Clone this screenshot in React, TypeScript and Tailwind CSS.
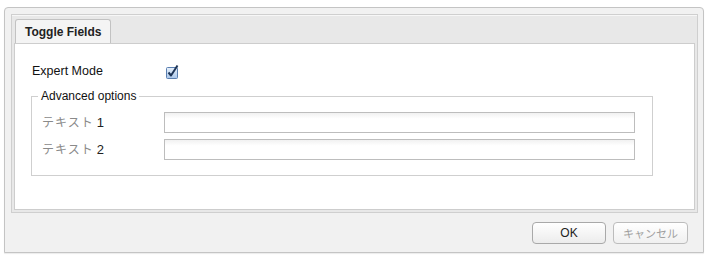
import React from 'react'

function CheckMark() {
  return (
    <svg width="14" height="15" viewBox="0 0 14 15">
      <defs>
        <linearGradient id="cb" x1="0" y1="0" x2="0" y2="1">
          <stop offset="0" stopColor="#e8f1fb" />
          <stop offset="1" stopColor="#a9c6ea" />
        </linearGradient>
      </defs>
      <rect x="0.5" y="3.5" width="11" height="11" rx="1" fill="url(#cb)" stroke="#5a7fb0" />
      <path d="M2.5 8.5 L5 11.5 L11.5 1.5" fill="none" stroke="#1d3557" strokeWidth="2" strokeLinejoin="round" />
    </svg>
  )
}

function Field({ label }: { label: string }) {
  const [kana, num] = label.split(' ')
  return (
    <div className="flex items-center h-[27px]">
      <div className="w-[132px] pl-[10px] text-[12px]">
        <span className="text-[#8a8a8a] tracking-[1px]" style={{ fontFamily: '"Noto Sans CJK JP", sans-serif' }}>{kana}</span>
        <span className="text-[#222] ml-[3px] text-[13px]">{num}</span>
      </div>
      <input
        className="w-[471px] h-[21px] border border-[#bdbdbd] bg-gradient-to-b from-[#f1f1f1] to-white to-30% outline-none"
        type="text"
      />
    </div>
  )
}

export default function App() {
  return (
    <div className="bg-white w-[712px] h-[261px] pl-[4px] pt-[7px]" style={{ fontFamily: '"Liberation Sans", Arial, sans-serif' }}>
      <div className="w-[700px] h-[246px] border border-[#c4c4c4] rounded-t-[4px] bg-[#f1f1f1] flex flex-col shadow-[0_1px_1px_rgba(0,0,0,0.08)]">
        {/* tab panel */}
        <div className="mt-[6px] ml-[6px] w-[687px] h-[199px] border border-[#cfcfcf] bg-[#e8e8e8] flex flex-col">
          <div className="h-[28px] border-t border-[#f7f7f7] flex items-end pl-[3px]">
            <div className="h-[24px] px-[9px] border border-b-0 border-[#c2c2c2] rounded-t-[3px] bg-[#f4f4f4] text-[12px] font-bold text-[#222] flex items-center">
              Toggle Fields
            </div>
          </div>
          <div className="flex-1 mx-[2px] mb-[2px] bg-white border border-[#cdcdcd] pt-[19px]">
            <div className="flex items-center h-[16px] text-[12.5px] text-[#111]">
              <div className="w-[151px] pl-[17px]">Expert Mode</div>
              <CheckMark />
            </div>
            <fieldset className="ml-[16px] mt-[10px] w-[622px] border border-[#cfcfcf] px-0 pt-0 pb-[12px]">
              <legend className="ml-[6px] px-[3px] text-[12px] text-[#111] leading-[14px]">Advanced options</legend>
              <div className="pt-[6px]">
                <Field label="テキスト 1" />
                <Field label="テキスト 2" />
              </div>
            </fieldset>
          </div>
        </div>
        {/* buttons */}
        <div className="flex justify-end gap-[7px] pr-[15px] mt-[9px]">
          <button className="w-[74px] h-[22px] rounded-[4px] border border-[#a9a9a9] bg-gradient-to-b from-white to-[#ececec] text-[12px] text-[#222]">
            OK
          </button>
          <button
            className="w-[75px] h-[22px] rounded-[4px] border border-[#bcbcbc] bg-gradient-to-b from-white to-[#f0f0f0] text-[11px] text-[#a0a0a0]"
            style={{ fontFamily: '"Noto Sans CJK JP", sans-serif' }}
          >
            キャンセル
          </button>
        </div>
      </div>
    </div>
  )
}
